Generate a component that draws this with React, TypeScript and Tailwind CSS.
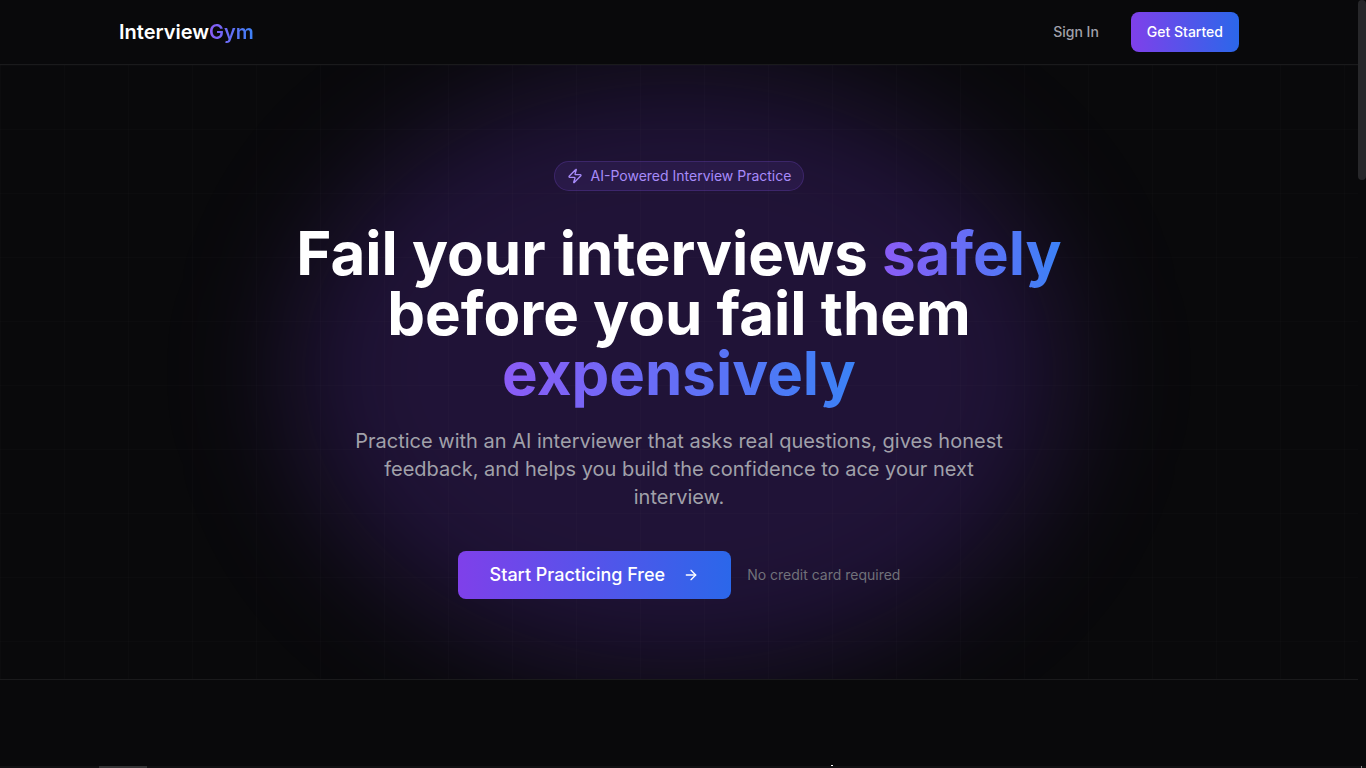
import { ArrowRight, Zap } from "lucide-react";

function Header() {
  return (
    <header className="relative z-10 border-b border-white/[0.07] bg-[#09090b]">
      <div className="mx-auto flex h-16 max-w-6xl items-center justify-between px-4">
        <a href="#" className="text-xl font-semibold text-white">
          Interview
          <span className="bg-[linear-gradient(to_right,#8b5cf6,#3b82f6)] bg-clip-text text-transparent">Gym</span>
        </a>
        <nav className="flex items-center gap-4">
          <a href="#signin" className="px-4 text-sm font-medium text-[#a1a1aa] hover:text-white">
            Sign In
          </a>
          <button
            type="button"
            className="h-10 rounded-lg bg-[linear-gradient(to_right,#7f40ea,#2b67ea)] px-4 text-sm font-medium text-white"
          >
            Get Started
          </button>
        </nav>
      </div>
    </header>
  );
}

function Hero() {
  return (
    <section className="relative overflow-hidden border-b border-white/[0.07]">
      <div className="absolute top-1/2 left-1/2 h-[600px] w-[780px] -translate-1/2 rounded-[50%] bg-[#7c3aed]/20 blur-[60px]"></div>
      <div className="absolute inset-0 bg-[linear-gradient(to_right,rgba(255,255,255,0.01)_1px,transparent_1px),linear-gradient(to_bottom,rgba(255,255,255,0.01)_1px,transparent_1px)] bg-size-[64px_64px]"></div>
      <div className="relative mx-auto flex max-w-4xl flex-col items-center px-4 pt-24 pb-20 text-center">
        <div className="flex items-center gap-2 rounded-full border border-[#8b5cf6]/20 bg-[#8b5cf6]/10 px-3 py-1 text-sm text-[#a78bfa]">
          <Zap className="size-4" />
          AI-Powered Interview Practice
        </div>
        <h1 className="mt-8 text-6xl leading-[60px] font-bold text-white">
          Fail your interviews{" "}
          <span className="bg-[linear-gradient(to_right,#8b5cf6,#3b82f6)] bg-clip-text text-transparent">safely</span>{" "}
          before you fail them{" "}
          <span className="bg-[linear-gradient(to_right,#8b5cf6,#3b82f6)] bg-clip-text text-transparent">expensively</span>
        </h1>
        <p className="mt-6 max-w-2xl text-xl text-[#a1a1aa]">
          Practice with an AI interviewer that asks real questions, gives honest feedback, and helps you build the
          confidence to ace your next interview.
        </p>
        <div className="mt-10 flex items-center gap-4">
          <button
            type="button"
            className="flex h-12 items-center gap-[18px] rounded-lg bg-[linear-gradient(to_right,#7f40ea,#2b67ea)] px-8 text-lg font-medium text-white"
          >
            Start Practicing Free
            <ArrowRight className="size-4" />
          </button>
          <span className="text-sm text-[#71717a]">No credit card required</span>
        </div>
      </div>
    </section>
  );
}

// sliver of the next section that shows above the fold
function NextSection() {
  return (
    <section className="flex flex-1 flex-col justify-end">
      <div className="mx-auto h-px w-[308px]">
        <div className="ml-auto h-px w-0.5 bg-white"></div>
      </div>
      <div className="h-0.5 bg-[#111113] pl-[99px]">
        <div className="h-0.5 w-12 bg-[#333335]"></div>
      </div>
    </section>
  );
}

export default function App() {
  return (
    <div className="flex h-screen overflow-hidden bg-[#09090b] font-['Inter',sans-serif]">
      <div className="flex min-w-0 flex-1 flex-col">
        <Header />
        <Hero />
        <NextSection />
      </div>
      <div className="flex w-2 flex-col justify-between">
        <div className="h-[180px] rounded-full bg-[#27272a]"></div>
        <div className="h-0.5 bg-[#111113] pl-[3px]">
          <div className="h-0.5 w-px bg-[#8a8a8c]"></div>
        </div>
      </div>
    </div>
  );
}
